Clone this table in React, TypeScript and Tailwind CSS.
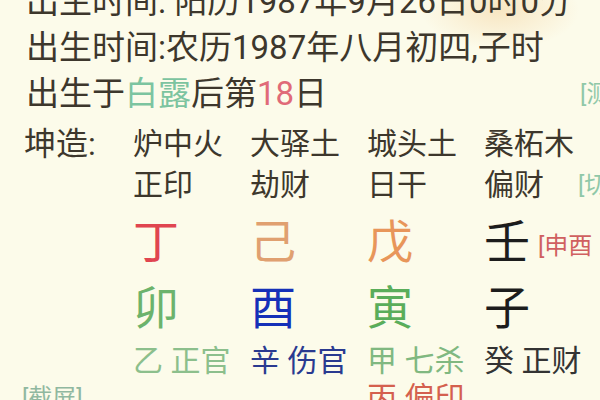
import React from "react";

const font = { fontFamily: 'Roboto, "Noto Sans CJK SC", sans-serif' };

export default function App() {
  return (
    <div
      className="relative w-[600px] h-[400px] overflow-hidden bg-[#fcfbea] text-[#3d372c]"
      style={font}
    >
      <div className="absolute left-[420px] top-[-30px] w-[160px] h-[80px] rounded-full bg-[radial-gradient(ellipse_at_center,_rgba(240,190,120,0.35),_rgba(252,251,234,0)_70%)]" />
      <div className="relative flex flex-col pl-[26px] mt-[-21px]">
        <div className="text-[33px] leading-[46px] whitespace-nowrap">出生时间: 阳历1987年9月26日0时0分</div>
        <div className="text-[33px] leading-[46px] whitespace-nowrap">出生时间:农历1987年八月初四,子时</div>
        <div className="flex items-center whitespace-nowrap">
          <span className="text-[33px] leading-[46px]">
            出生于<span className="text-[#7cc4a0]">白露</span>后第<span className="text-[#e06a78]">18</span>日
          </span>
          <span className="ml-[253px] text-[24px] text-[#90c8a8]">[测</span>
        </div>
      </div>
      <div className="relative mt-[5px] pl-[24px] grid grid-cols-[109px_117px_117px_117px_117px] grid-rows-[44px_38px_76px_56px_50px_24px] items-center whitespace-nowrap">
        <div className="text-[32px] leading-[40px]">坤造:</div>
        <div className="text-[30px] leading-[40px]">炉中火</div>
        <div className="text-[30px] leading-[40px]">大驿土</div>
        <div className="text-[30px] leading-[40px]">城头土</div>
        <div className="text-[30px] leading-[40px]">桑柘木</div>

        <div />
        <div className="text-[30px] leading-[38px]">正印</div>
        <div className="text-[30px] leading-[38px]">劫财</div>
        <div className="text-[30px] leading-[38px]">日干</div>
        <div className="flex items-center">
          <span className="text-[30px] leading-[38px]">偏财</span>
          <span className="ml-[34px] text-[24px] text-[#90c8a8]">[切</span>
        </div>

        <div />
        <div className="text-[46px] leading-[56px] text-[#e04550]">丁</div>
        <div className="text-[46px] leading-[56px] text-[#e0a070]">己</div>
        <div className="text-[46px] leading-[56px] text-[#e8965a]">戊</div>
        <div className="flex items-center">
          <span className="text-[46px] leading-[56px] text-[#1c1c1c]">壬</span>
          <span className="ml-[8px] mt-[8px] text-[24px] text-[#d06060]">[申酉</span>
        </div>

        <div />
        <div className="text-[46px] leading-[56px] text-[#6cb36c]">卯</div>
        <div className="text-[46px] leading-[56px] text-[#1530b8]">酉</div>
        <div className="text-[46px] leading-[56px] text-[#5aad5a]">寅</div>
        <div className="text-[46px] leading-[56px] text-[#1c1c1c]">子</div>

        <div />
        <div className="text-[30px] leading-[46px] text-[#8cbf8c]">乙 正官</div>
        <div className="text-[30px] leading-[46px] text-[#2a3a90]">辛 伤官</div>
        <div className="text-[30px] leading-[46px] text-[#80b880]">甲 七杀</div>
        <div className="text-[30px] leading-[46px] text-[#333333]">癸 正财</div>

        <div className="text-[24px] leading-[24px] text-[#90b8a0] ml-[-2px]">[截屏]</div>
        <div />
        <div />
        <div className="text-[30px] leading-[24px] text-[#d4604e]">丙 偏印</div>
        <div />
      </div>
    </div>
  );
}
